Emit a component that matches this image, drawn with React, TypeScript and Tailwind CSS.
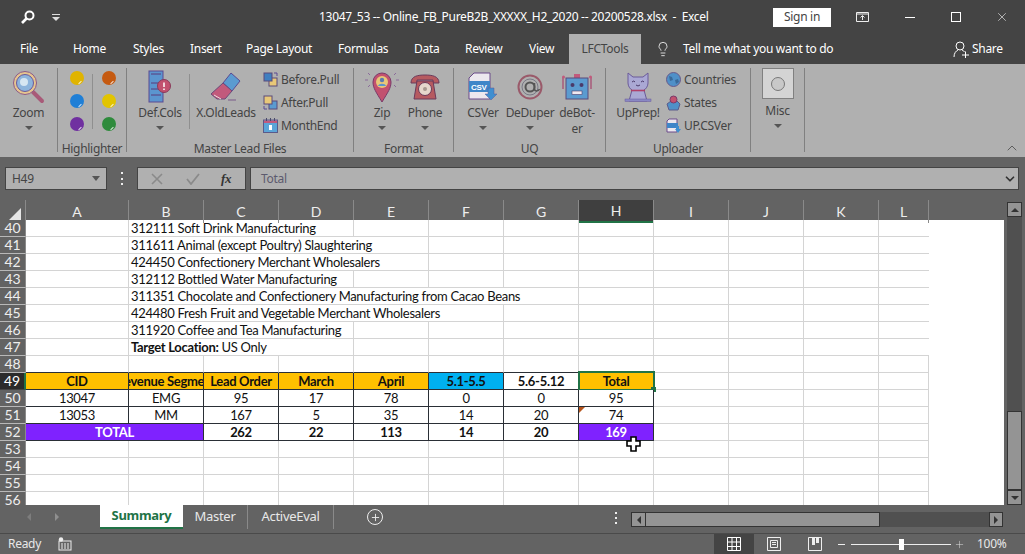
import { ReactNode } from "react";
import { ChevronDown, ChevronUp, Lightbulb, Plus, X } from "lucide-react";

const ui = "font-['Noto_Sans',sans-serif] tracking-[-0.3px]";
const sheet = "font-['Lato',sans-serif]";

const tabs = [
  { label: "File", cls: "w-[53px]" },
  { label: "Home", cls: "w-[60px]" },
  { label: "Styles", cls: "w-[57px]" },
  { label: "Insert", cls: "w-[56px]" },
  { label: "Page Layout", cls: "w-[92px]" },
  { label: "Formulas", cls: "w-[76px]" },
  { label: "Data", cls: "w-[51px]" },
  { label: "Review", cls: "w-[64px]" },
  { label: "View", cls: "w-[40px]" },
];

const columns = ["A", "B", "C", "D", "E", "F", "G", "H", "I", "J", "K", "L", "M"];
const gridCols = "grid grid-cols-[26px_103px_75px_75px_75px_75px_75px_75px_75px_75px_75px_75px_50px]";

const notes: [number, ReactNode, string, number][] = [
  [40, "312111 Soft Drink Manufacturing", "col-span-3", 8],
  [41, "311611 Animal (except Poultry) Slaughtering", "col-span-4", 7],
  [42, "424450 Confectionery Merchant Wholesalers", "col-span-4", 7],
  [43, "312112 Bottled Water Manufacturing", "col-span-3", 8],
  [44, "311351 Chocolate and Confectionery Manufacturing from Cacao Beans", "col-span-6", 5],
  [45, "424480 Fresh Fruit and Vegetable Merchant Wholesalers", "col-span-5", 6],
  [46, "311920 Coffee and Tea Manufacturing", "col-span-3", 8],
  [47, <span><b>Target Location:</b> US Only</span>, "col-span-3", 8],
];

function Caret({ className = "" }: { className?: string }) {
  return <span className={`block h-0 w-0 border-x-[4px] border-t-[4px] border-x-transparent border-t-[#555] ${className}`} />;
}

function LargeButton({ w, label, icon, caret = true }: { w: string; label: ReactNode; icon: ReactNode; caret?: boolean }) {
  return (
    <div className={`flex shrink-0 flex-col items-center ${w}`}>
      <div className="flex h-[37px] items-center justify-center">{icon}</div>
      <div className="whitespace-nowrap text-center leading-[16px]">{label}</div>
      {caret && <Caret className="mt-[5px]" />}
    </div>
  );
}

function Group({ w, label, children }: { w: string; label: string; children: ReactNode }) {
  return (
    <div className={`flex h-[84px] shrink-0 flex-col border-r border-[#808080] ${w}`}>
      <div className="flex h-[73px] shrink-0 items-start">{children}</div>
      <div className="shrink-0 text-center leading-[15px]">{label}</div>
    </div>
  );
}

function SmallItem({ icon, label }: { icon: ReactNode; label: string }) {
  return (
    <div className="flex h-[23px] items-center gap-[3px]">
      <span className="flex w-[15px] justify-center">{icon}</span>
      <span>{label}</span>
    </div>
  );
}

function Dot({ color }: { color: string }) {
  return (
    <span className={`relative block h-[14px] w-[14px] rounded-full ${color}`}>
      <span className="absolute bottom-[2px] right-[2px] h-[1px] w-[4px] -rotate-45 bg-white/80" />
    </span>
  );
}

function ZoomIcon() {
  return (
    <svg width="34" height="34" viewBox="0 0 34 34">
      <path d="M21 22l9 9" stroke="#a85a78" strokeWidth="4" strokeLinecap="round" />
      <circle cx="13" cy="13" r="11.5" fill="#e6c58f" stroke="#8a5a8a" />
      <circle cx="13" cy="13" r="8.5" fill="#8db4dc" stroke="#6a5a9a" />
      <circle cx="12" cy="12" r="4" fill="#d6e6f2" />
    </svg>
  );
}

function DefColsIcon() {
  return (
    <svg width="24" height="33" viewBox="0 0 24 33">
      <rect x="1" y="1" width="14" height="31" fill="#5b95cf" stroke="#5a4a92" />
      <path d="M3 4h10M3 13h10M3 19h10M3 25h10" stroke="#5a3a7a" />
      <circle cx="16" cy="16" r="6.5" fill="#c2516f" stroke="#8a3a5a" />
      <path d="M16 12.5v4.5M16 18.5v1.5" stroke="#fff" strokeWidth="1.5" />
    </svg>
  );
}

function EraserIcon() {
  return (
    <svg width="32" height="30" viewBox="0 0 32 30">
      <path d="M21 1l9 8-8 10-9-8z" fill="#5b9bd0" stroke="#5a4a92" />
      <path d="M13 11l9 8-7 8H7L1 22z" fill="#c25a7c" stroke="#6a4a7a" />
      <path d="M4 23l7 4" stroke="#f0e0e0" />
      <path d="M18 28h8" stroke="#7a5a8a" />
    </svg>
  );
}

function SwapIcon({ flip = false }: { flip?: boolean }) {
  return (
    <svg width="15" height="15" viewBox="0 0 15 15">
      <rect x="6" y="6" width="8" height="8" fill={flip ? "#5b9bd0" : "#e8c878"} stroke="#5a4a7a" />
      <rect x="1" y="1" width="8" height="8" fill={flip ? "#e8c878" : "#3f7fc0"} stroke="#5a4a7a" />
      <path d={flip ? "M1 11v3h3" : "M11 1h3v3"} fill="none" stroke="#5a4a92" />
    </svg>
  );
}

function CalendarIcon() {
  return (
    <svg width="15" height="15" viewBox="0 0 15 15">
      <rect x="0.5" y="2" width="14" height="12.5" fill="#5ba5d8" stroke="#5a5a8a" />
      <rect x="1" y="2.5" width="13" height="2.5" fill="#c25a7c" />
      <path d="M3.5 0v3M7.5 0v3M11.5 0v3" stroke="#4a4a6a" />
      <path d="M6 7h3v5H6" fill="#fff" />
    </svg>
  );
}

function PinIcon() {
  return (
    <svg width="34" height="32" viewBox="0 0 34 32">
      <path d="M17 31C11 21 8 17 8 11a9 9 0 0118 0c0 6-3 10-9 20z" fill="#c2516f" stroke="#7a3a6a" />
      <circle cx="17" cy="11" r="6" fill="#e8c878" />
      <circle cx="17" cy="9" r="2.2" fill="#5b7bb0" />
      <path d="M13 15c1-3 7-3 8 0z" fill="#5b95cf" />
      <path d="M0 9h3M31 9h3M3 2l2 2M31 2l-2 2M3 16l2-2M31 16l-2-2" stroke="#8a6a9a" />
    </svg>
  );
}

function PhoneIcon() {
  return (
    <svg width="30" height="26" viewBox="0 0 30 26">
      <path d="M1 9C1 2 8 1 15 1s14 1 14 8h-6V6H7v3z" fill="#b65a60" stroke="#6a3a5a" />
      <path d="M7 7h16l3 18H4z" fill="#b65a60" stroke="#6a3a5a" />
      <circle cx="15" cy="15" r="6.5" fill="#e6d8cc" stroke="#6a3a5a" />
      <circle cx="15" cy="15" r="2" fill="#a89a90" />
    </svg>
  );
}

function CsvIcon() {
  return (
    <svg width="30" height="29" viewBox="0 0 30 29">
      <path d="M6 1h16v26H1V6z" fill="#ece8ee" stroke="#6a4a8a" />
      <rect x="1" y="9" width="21" height="11" fill="#3f86c8" />
      <text x="3" y="18" fontSize="8" fontWeight="700" fill="#fff" fontFamily="Liberation Sans, sans-serif">CSV</text>
      <path d="M20 16h6v6h3l-6 6-6-6h3z" fill="#3f8fd0" stroke="#5a5a9a" strokeWidth="0.5" />
    </svg>
  );
}

function AtIcon() {
  return (
    <svg width="26" height="28" viewBox="0 0 26 28">
      <circle cx="13" cy="14" r="11.5" fill="none" stroke="#9a5a6a" strokeWidth="2" />
      <circle cx="13" cy="14" r="8" fill="none" stroke="#6a6a7a" strokeWidth="0.8" />
      <circle cx="13" cy="14" r="4.5" fill="none" stroke="#555" strokeWidth="2" />
      <path d="M17.5 10v6c0 2.5 4 2.5 5 0" fill="none" stroke="#555" strokeWidth="1.5" />
    </svg>
  );
}

function RobotIcon() {
  return (
    <svg width="30" height="27" viewBox="0 0 30 27">
      <path d="M1 4v12M29 4v12" stroke="#a85a7a" strokeWidth="1.5" />
      <circle cx="1.5" cy="4" r="1.5" fill="#c25a7c" />
      <circle cx="28.5" cy="4" r="1.5" fill="#c25a7c" />
      <rect x="12" y="1" width="6" height="4" fill="#c25a7c" />
      <rect x="4" y="5" width="22" height="21" fill="#5b9bd0" stroke="#5a4a7a" />
      <circle cx="10.5" cy="12" r="2" fill="#4a3a6a" />
      <circle cx="19.5" cy="12" r="2" fill="#4a3a6a" />
      <rect x="10" y="18" width="10" height="3.5" fill="#f0e8f0" stroke="#4a3a6a" strokeWidth="0.6" />
    </svg>
  );
}

function CatIcon() {
  return (
    <svg width="30" height="31" viewBox="0 0 30 31">
      <path d="M5 2l5 4h10l5-4v10c0 3-2 6-4 7l3 11H6l3-11c-2-1-4-4-4-7z" fill="#aaa8d4" stroke="#6a5a9a" />
      <path d="M9 11q2-2 3 0M18 11q2-2 3 0M13 14q2 2 4 0" fill="none" stroke="#4a3a6a" />
      <path d="M8 19.5h14" stroke="#b0406a" strokeWidth="1.6" />
      <rect x="2" y="28" width="26" height="2.5" fill="#8a88c4" stroke="#6a5a9a" strokeWidth="0.5" />
    </svg>
  );
}

function GlobeIcon() {
  return (
    <svg width="15" height="15" viewBox="0 0 15 15">
      <circle cx="7.5" cy="7.5" r="7" fill="#4f90c8" stroke="#6a5a8a" />
      <path d="M3 4l3 1 1 3-3 1zM9 8l3-1 1 3-3 2z" fill="#3a6a9a" />
    </svg>
  );
}

function StatesIcon() {
  return (
    <svg width="15" height="16" viewBox="0 0 15 16">
      <path d="M1 9l4-3h6l3 3-2 6H3z" fill="#4f90c8" stroke="#5a5a8a" />
      <circle cx="7.5" cy="4.5" r="3.5" fill="#c2516f" stroke="#7a3a6a" />
    </svg>
  );
}

function UpCsvIcon() {
  return (
    <svg width="15" height="15" viewBox="0 0 15 15">
      <path d="M3 1h8v13H1V3z" fill="#ece8ee" stroke="#6a4a8a" />
      <rect x="1" y="5" width="11" height="5" fill="#3f86c8" />
      <path d="M10 8h3v3h2l-3 4-3-4h1z" fill="#3f8fd0" />
    </svg>
  );
}

function Ribbon() {
  return (
    <div className={`flex h-[93px] items-start bg-[#b0b0b0] pt-[4px] text-[12px] text-[#444] ${ui}`}>
      <Group w="w-[58px]" label="">
        <LargeButton w="w-[57px]" label="Zoom" icon={<ZoomIcon />} />
      </Group>
      <Group w="w-[69px]" label="Highlighter">
        <div className="flex h-[69px] w-full pl-[12px] pt-[3px]">
          <div className="flex h-[60px] w-[15px] flex-col justify-between">
            <Dot color="bg-[#e0b400]" />
            <Dot color="bg-[#1f7fd6]" />
            <Dot color="bg-[#7030a0]" />
          </div>
          <span className="ml-[7px] mr-[9px] mt-[3px] h-[55px] w-px bg-[#8f8f8f]" />
          <div className="flex h-[60px] w-[15px] flex-col justify-between">
            <Dot color="bg-[#c55a11]" />
            <Dot color="bg-[#e2c400]" />
            <Dot color="bg-[#2e8b3c]" />
          </div>
        </div>
      </Group>
      <Group w="w-[227px]" label="Master Lead Files">
        <LargeButton w="w-[62px] pl-[4px]" label="Def.Cols" icon={<DefColsIcon />} />
        <span className="mt-[6px] h-[55px] w-px shrink-0 bg-[#8f8f8f]" />
        <LargeButton w="w-[72px]" label="X.OldLeads" caret={false} icon={<EraserIcon />} />
        <div className="ml-[1px] flex flex-col">
          <SmallItem icon={<SwapIcon />} label="Before.Pull" />
          <SmallItem icon={<SwapIcon flip />} label="After.Pull" />
          <SmallItem icon={<CalendarIcon />} label="MonthEnd" />
        </div>
      </Group>
      <Group w="w-[100px]" label="Format">
        <LargeButton w="w-[56px]" label="Zip" icon={<PinIcon />} />
        <LargeButton w="w-[30px]" label="Phone" icon={<PhoneIcon />} />
      </Group>
      <Group w="w-[152px]" label="UQ">
        <LargeButton w="w-[58px]" label="CSVer" icon={<CsvIcon />} />
        <LargeButton w="w-[36px]" label="DeDuper" icon={<AtIcon />} />
        <LargeButton w="w-[58px]" label={<>deBot-<br />er</>} caret={false} icon={<RobotIcon />} />
      </Group>
      <Group w="w-[145px]" label="Uploader">
        <LargeButton w="w-[64px]" label="UpPrep!" caret={false} icon={<CatIcon />} />
        <div className="-ml-[4px] flex flex-col">
          <SmallItem icon={<GlobeIcon />} label="Countries" />
          <SmallItem icon={<StatesIcon />} label="States" />
          <SmallItem icon={<UpCsvIcon />} label="UP.CSVer" />
        </div>
      </Group>
      <Group w="w-[54px]" label="">
        <div className="flex w-[53px] flex-col items-center">
          <div className="flex h-[31px] w-[32px] items-center justify-center border border-[#808080] bg-[#d4d4d4]">
            <span className="h-[14px] w-[14px] rounded-full border border-[#777] bg-[#c8c8c8]" />
          </div>
          <div className="mt-[4px] leading-[16px]">Misc</div>
          <Caret className="mt-[5px]" />
        </div>
      </Group>
      <div className="flex h-[88px] flex-1 items-end justify-end pr-[5px]">
        <ChevronUp size={16} strokeWidth={1} className="text-[#333]" />
      </div>
    </div>
  );
}

function FormulaBar() {
  return (
    <div className={`flex h-[43px] items-start bg-[#636363] pl-[5px] pr-[6px] pt-[10px] text-[12px] text-[#444] ${ui}`}>
      <div className="flex h-[23px] w-[102px] items-center justify-between border border-[#444] bg-[#b0b0b0] pl-[6px] pr-[6px]">
        <span>H49</span>
        <Caret className="border-x-[4px] border-t-[5px] border-t-[#333]" />
      </div>
      <div className="ml-[14px] mr-[14px] mt-[5px] flex h-[13px] w-[2px] flex-col justify-between">
        <span className="h-[2px] w-[2px] bg-[#eee]" />
        <span className="h-[2px] w-[2px] bg-[#eee]" />
        <span className="h-[2px] w-[2px] bg-[#eee]" />
      </div>
      <div className="flex h-[23px] w-[109px] items-center border border-[#444] bg-[#b0b0b0] pl-[12px]">
        <svg width="14" height="12" viewBox="0 0 14 12" className="text-[#8a8a8a]">
          <path d="M2 1l10 10M12 1L2 11" stroke="currentColor" strokeWidth="1.6" />
        </svg>
        <svg width="14" height="12" viewBox="0 0 14 12" className="ml-[22px] text-[#8a8a8a]">
          <path d="M1 6l4 5 8-10" fill="none" stroke="currentColor" strokeWidth="1.8" />
        </svg>
        <span className="ml-[21px] font-['Liberation_Serif',serif] text-[13px] font-bold italic text-[#333]">fx</span>
      </div>
      <div className="ml-[4px] flex h-[23px] flex-1 items-center justify-between border border-[#444] bg-[#b0b0b0] pl-[10px] pr-[1px] text-[#5c5a6e]">
        <span>Total</span>
        <ChevronDown size={14} strokeWidth={3} className="text-[#333]" />
      </div>
    </div>
  );
}

function ColumnHeader() {
  return (
    <div className={`${gridCols} h-[20px] bg-[#636363] ${sheet} text-[14px] text-[#eee]`}>
      <div className="relative border-r border-[#8a8a8a]">
        <span className="absolute bottom-[3px] right-[4px] h-0 w-0 border-b-[12px] border-l-[12px] border-b-[#e6e6e6] border-l-transparent" />
      </div>
      {columns.map((c) => (
        <div
          key={c}
          className={`flex items-center justify-center border-r border-[#8a8a8a] ${c === "H" ? "border-b-2 border-b-[#217346] bg-[#3f3f3f]" : ""} ${c === "M" ? "border-r-0" : ""}`}
        >
          {c}
        </div>
      ))}
    </div>
  );
}

function RowHead({ n }: { n: number }) {
  return (
    <div
      className={`flex items-center justify-center border-b text-[14px] tracking-normal ${
        n === 49
          ? "border-r-2 border-b-[#444] border-r-[#217346] bg-[#2b2b2b] text-white"
          : "border-r border-b-[#b8b8b8] border-r-[#8a8a8a] bg-[#636363] text-[#eee]"
      }`}
    >
      {n}
    </div>
  );
}

function Blank({ dark = false, last = false }: { dark?: boolean; last?: boolean }) {
  return <div className={`border-b border-r ${dark ? "border-b-[#2a2f36]" : "border-b-[#d4d4d4]"} border-r-[#d4d4d4] ${last ? "border-r-0" : ""}`} />;
}

const box = "flex items-center justify-center overflow-hidden whitespace-nowrap border-b border-r border-[#2a2f36]";

function DataCell({ text, cls = "bg-white text-[#111]" }: { text: string; cls?: string }) {
  return <div className={`${box} ${cls}`}>{text}</div>;
}

function Trailing({ count }: { count: number }) {
  return (
    <>
      {Array.from({ length: count }).map((_, i) => (
        <Blank key={i} last={i === count - 1} />
      ))}
    </>
  );
}

function Grid() {
  const header = "bg-[#ffc000] font-bold text-[#111]";
  return (
    <div className={`${sheet} h-[285px] overflow-hidden bg-white text-[13px] leading-[16px] tracking-[-0.3px] text-[#111]`}>
      {notes.map(([n, text, span, fill]) => (
        <div key={n} className={`${gridCols} h-[17px]`}>
          <RowHead n={n} />
          <Blank />
          <div className={`${span} flex items-center whitespace-nowrap border-b border-r border-[#d4d4d4] pl-[2px]`}>{text}</div>
          <Trailing count={fill} />
        </div>
      ))}

      <div className={`${gridCols} h-[17px]`}>
        <RowHead n={48} />
        {Array.from({ length: 8 }).map((_, i) => (
          <Blank key={i} dark />
        ))}
        <Trailing count={5} />
      </div>

      <div className={`${gridCols} h-[17px]`}>
        <RowHead n={49} />
        <DataCell text="CID" cls={header} />
        <div className={`${box} ${header}`}>
          <span className="shrink-0">Revenue Segment</span>
        </div>
        <DataCell text="Lead Order" cls={header} />
        <DataCell text="March" cls={header} />
        <DataCell text="April" cls={header} />
        <DataCell text="5.1-5.5" cls="bg-[#00b0f0] font-bold text-[#111]" />
        <DataCell text="5.6-5.12" cls="bg-white font-bold text-[#111]" />
        <div className={`${box} ${header} relative overflow-visible`}>
          Total
          <span className="absolute -inset-[2px] -left-[1px] -top-[2px] border-2 border-[#217346]" />
          <span className="absolute -bottom-[3px] -right-[3px] h-[5px] w-[5px] bg-[#217346]" />
        </div>
        <Trailing count={5} />
      </div>

      {[
        [50, "13047", "EMG", "95", "17", "78", "0", "0", "95"],
        [51, "13053", "MM", "167", "5", "35", "14", "20", "74"],
      ].map(([n, ...vals]) => (
        <div key={n} className={`${gridCols} h-[17px]`}>
          <RowHead n={n as number} />
          {vals.map((v, i) => (
            <div key={i} className={`${box} relative bg-white`}>
              {v}
              {n === 51 && i === 7 && (
                <span className="absolute left-0 top-0 h-0 w-0 border-r-[6px] border-t-[6px] border-r-transparent border-t-[#b5541c]" />
              )}
            </div>
          ))}
          <Trailing count={5} />
        </div>
      ))}

      <div className={`${gridCols} h-[17px]`}>
        <RowHead n={52} />
        <div className={`${box} col-span-2 bg-[#7f22ff] font-bold text-white`}>TOTAL</div>
        {["262", "22", "113", "14", "20"].map((v, i) => (
          <div key={i} className={`${box} bg-white font-bold`}>{v}</div>
        ))}
        <div className={`${box} relative overflow-visible bg-[#7f22ff] font-bold text-white`}>
          169
          <svg width="15" height="16" viewBox="0 0 15 16" className="absolute left-[47px] top-[12px] z-10">
            <path d="M5 1h5v4h4v5h-4v5H5v-5H1V5h4z" fill="#fff" stroke="#000" strokeWidth="1.6" />
          </svg>
        </div>
        <Trailing count={5} />
      </div>

      {[53, 54, 55, 56].map((n) => (
        <div key={n} className={`${gridCols} h-[17px]`}>
          <RowHead n={n} />
          <Trailing count={13} />
        </div>
      ))}
    </div>
  );
}

function VScrollbar() {
  return (
    <div className="flex h-[305px] w-[21px] flex-col items-center bg-[#636363] pt-[2px]">
      <div className="flex h-[15px] w-[15px] items-center justify-center border border-[#333] bg-[#949494]">
        <span className="h-0 w-0 border-x-[4px] border-b-[4px] border-x-transparent border-b-[#333]" />
      </div>
      <div className="flex h-[273px] w-[15px] flex-col justify-end bg-[#505050]">
        <div className="h-[79px] border border-[#333] bg-[#949494]" />
      </div>
      <div className="flex h-[15px] w-[15px] items-center justify-center border border-[#333] bg-[#949494]">
        <span className="h-0 w-0 border-x-[4px] border-t-[4px] border-x-transparent border-t-[#333]" />
      </div>
    </div>
  );
}

function SheetTabs() {
  return (
    <div className={`flex h-[28px] items-start bg-[#636363] text-[13px] text-[#e8e8e8] ${ui}`}>
      <div className="flex h-[24px] w-[100px] items-center pl-[27px]">
        <span className="h-0 w-0 border-y-[4px] border-r-[4px] border-y-transparent border-r-[#7d7d7d]" />
        <span className="ml-[24px] h-0 w-0 border-y-[4px] border-l-[4px] border-y-transparent border-l-[#8f8f8f]" />
      </div>
      <div className="flex h-[24px] w-[83px] items-center justify-center border-b-2 border-[#217346] bg-white font-bold text-[#217346]">Summary</div>
      <div className="flex h-[24px] w-[65px] items-center justify-center border-r border-[#8a8a8a]">Master</div>
      <div className="flex h-[24px] w-[86px] items-center justify-center border-r border-[#8a8a8a]">ActiveEval</div>
      <div className="ml-[33px] flex h-[24px] items-center">
        <span className="flex h-[16px] w-[16px] items-center justify-center rounded-full border border-[#eee]">
          <Plus size={11} strokeWidth={2} className="text-[#eee]" />
        </span>
      </div>
      <div className="ml-[232px] mt-[7px] flex h-[12px] w-[2px] flex-col justify-between">
        <span className="h-[2px] w-[2px] bg-[#eee]" />
        <span className="h-[2px] w-[2px] bg-[#eee]" />
        <span className="h-[2px] w-[2px] bg-[#eee]" />
      </div>
      <div className="ml-[14px] mt-[7px] flex h-[15px] w-[372px]">
        <div className="flex w-[15px] items-center justify-center border border-[#333] bg-[#949494]">
          <span className="h-0 w-0 border-y-[4px] border-r-[4px] border-y-transparent border-r-[#333]" />
        </div>
        <div className="w-[234px] border border-l-0 border-[#333] bg-[#949494]" />
        <div className="flex-1 bg-[#505050]" />
        <div className="flex w-[14px] items-center justify-center border border-[#333] bg-[#949494]">
          <span className="h-0 w-0 border-y-[4px] border-l-[4px] border-y-transparent border-l-[#333]" />
        </div>
      </div>
    </div>
  );
}

function StatusBar() {
  return (
    <div className={`flex h-[21px] items-center border-t border-[#4a4a4a] bg-[#636363] text-[12px] text-[#e8e8e8] ${ui}`}>
      <span className="ml-[8px] w-[50px]">Ready</span>
      <svg width="14" height="14" viewBox="0 0 14 14">
        <rect x="1" y="4" width="12" height="9" fill="none" stroke="#eee" />
        <circle cx="3" cy="2.5" r="2.2" fill="#eee" />
        <path d="M3 7h8M3 9h8M3 11h8" stroke="#eee" strokeDasharray="2 1" />
      </svg>
      <div className="ml-[642px] flex h-[20px] w-[40px] items-center justify-center bg-[#444]">
        <svg width="14" height="14" viewBox="0 0 14 14">
          <path d="M.5.5h13v13H.5zM.5 5h13M.5 9.5h13M5 .5v13M9.5.5v13" fill="none" stroke="#fff" />
        </svg>
      </div>
      <div className="flex w-[40px] justify-center">
        <svg width="14" height="14" viewBox="0 0 14 14">
          <path d="M.5.5h13v13H.5zM3.5 3.5h7v7h-7zM5 5.5h4M5 7.5h4" fill="none" stroke="#eee" />
        </svg>
      </div>
      <div className="flex w-[41px] justify-center">
        <svg width="14" height="14" viewBox="0 0 14 14">
          <path d="M.5.5h13v13H.5z" fill="none" stroke="#eee" />
          <path d="M4 1h3v7H4zM8 1h3v5H8z" fill="#eee" />
        </svg>
      </div>
      <span className="ml-[3px] h-px w-[7px] bg-[#eee]" />
      <div className="relative ml-[6px] h-px w-[100px] bg-[#eee]">
        <span className="absolute left-[48px] top-[-5px] h-[11px] w-[5px] bg-white" />
      </div>
      <Plus size={11} strokeWidth={1} className="ml-[3px] text-[#eee]" />
      <span className="ml-[12px]">100%</span>
    </div>
  );
}

export default function App() {
  return (
    <div className="h-[554px] w-[1025px] overflow-hidden bg-[#444]">
      <div className={`flex h-[34px] items-center text-[12px] text-white ${ui}`}>
        <svg width="14" height="14" viewBox="0 0 14 14" className="ml-[21px]">
          <circle cx="8.5" cy="5.5" r="4" fill="none" stroke="#fff" strokeWidth="2" />
          <path d="M5.5 8.5L1 13" stroke="#fff" strokeWidth="2.6" />
        </svg>
        <div className="ml-[16px] flex w-[10px] flex-col items-center">
          <span className="h-px w-[8px] bg-[#ddd]" />
          <span className="mt-[2px] h-0 w-0 border-x-[4px] border-t-[4px] border-x-transparent border-t-[#ddd]" />
        </div>
        <div className="ml-[258px] w-[454px] whitespace-nowrap">13047_53 -- Online_FB_PureB2B_XXXXX_H2_2020 -- 20200528.xlsx&nbsp; -&nbsp; Excel</div>
        <div className="flex h-[19px] w-[58px] items-center justify-center bg-white text-[#444]">Sign in</div>
        <svg width="14" height="10" viewBox="0 0 14 10" className="ml-[25px]">
          <path d="M.5.5h12v9H.5zM.5 2h12M6.5 8V4M4.5 5.5l2-2 2 2" fill="none" stroke="#eee" />
        </svg>
        <span className="ml-[35px] h-px w-[10px] bg-white" />
        <span className="ml-[36px] h-[10px] w-[10px] border border-white" />
        <X size={14} strokeWidth={1} className="ml-[34px]" />
      </div>

      <div className={`flex h-[30px] items-stretch pl-[20px] text-[12px] text-white ${ui}`}>
        {tabs.map((t) => (
          <div key={t.label} className={`flex items-center ${t.cls}`}>
            <span>{t.label}</span>
          </div>
        ))}
        <div className="flex w-[72px] items-center justify-center bg-[#b0b0b0] text-[#444]">LFCTools</div>
        <Lightbulb size={16} strokeWidth={1.2} className="ml-[14px] mt-[7px]" />
        <div className="ml-[12px] flex w-[270px] items-center">Tell me what you want to do</div>
        <svg width="16" height="17" viewBox="0 0 16 17" className="mt-[7px]">
          <circle cx="7" cy="5" r="4" fill="none" stroke="#fff" />
          <path d="M1 16c0-4 2-6 4-7M9 9c1 .3 2 1 2.500 2M9 14h7M12.500 10.500v7" fill="none" stroke="#fff" />
        </svg>
        <div className="ml-[3px] flex items-center">Share</div>
      </div>

      <Ribbon />
      <FormulaBar />

      <div className="flex">
        <div className="w-[1004px]">
          <ColumnHeader />
          <Grid />
        </div>
        <VScrollbar />
      </div>

      <SheetTabs />
      <StatusBar />
    </div>
  );
}
